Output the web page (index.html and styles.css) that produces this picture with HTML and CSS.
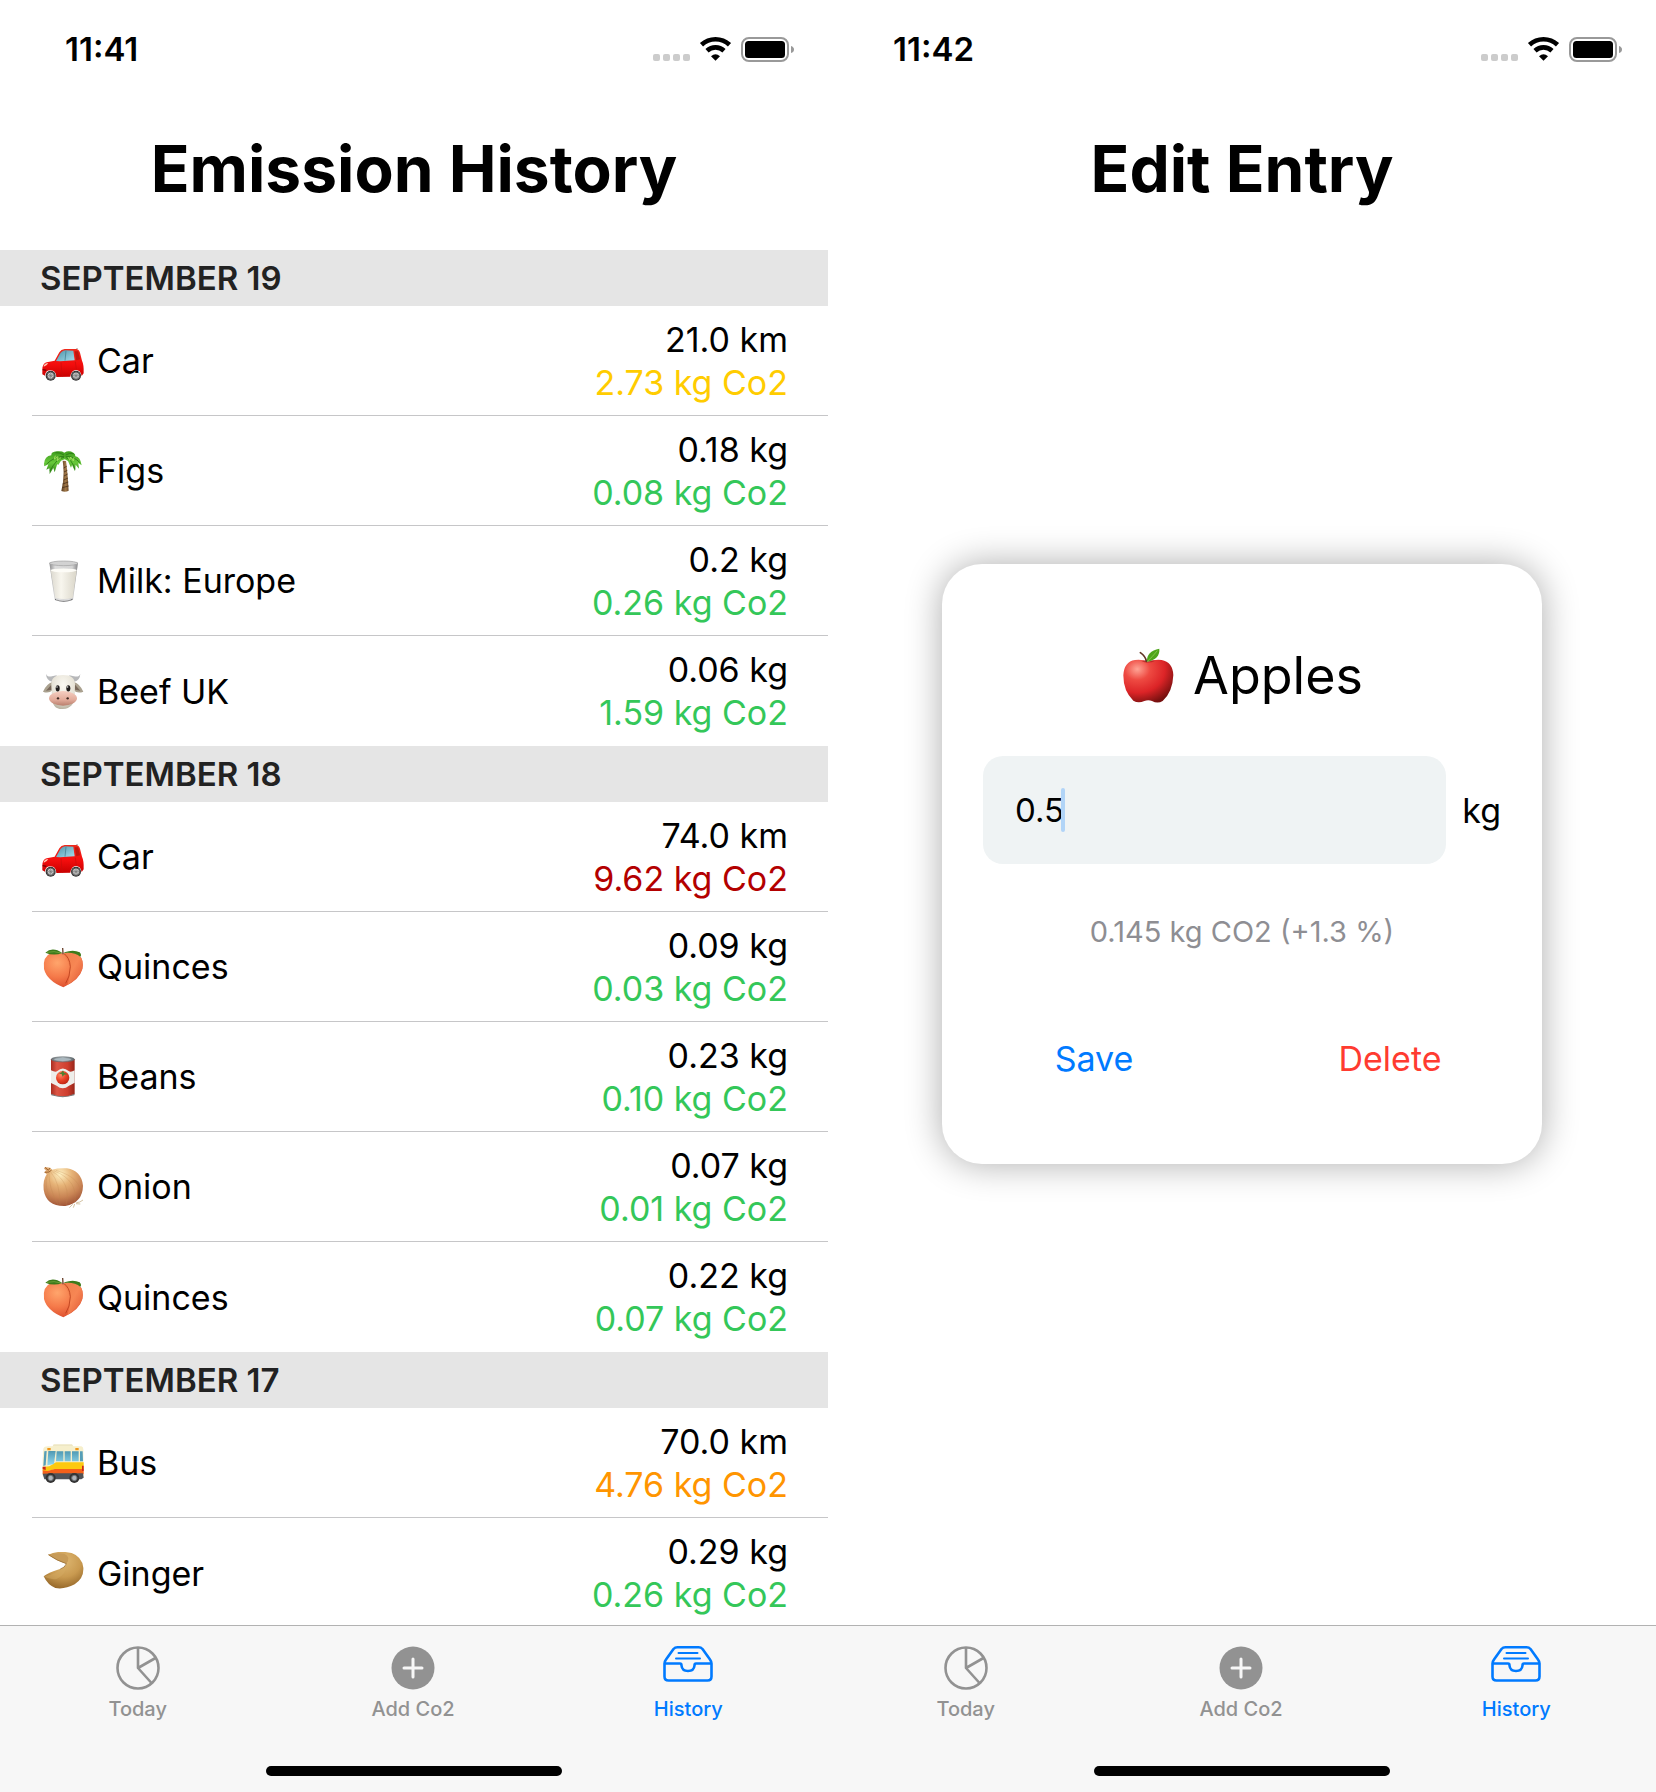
FILE: index.html
```html
<!DOCTYPE html>
<html lang="en">
<head>
<meta charset="utf-8">
<meta name="viewport" content="width=device-width, initial-scale=1">
<title>Emission History</title>
<link rel="stylesheet" href="styles.css">
</head>
<body>
<svg class="sprite" aria-hidden="true">
  <defs>
    <linearGradient id="g-car" x1="0" y1="0" x2="0" y2="1"><stop offset="0" stop-color="#ee2a1c"/><stop offset=".55" stop-color="#f40d0d"/><stop offset="1" stop-color="#c80000"/></linearGradient>
    <linearGradient id="g-glass" x1="0" y1="0" x2="1" y2="1"><stop offset="0" stop-color="#4d93a8"/><stop offset="1" stop-color="#a5dfee"/></linearGradient>
    <linearGradient id="g-leaf" x1="0" y1="0" x2="0" y2="1"><stop offset="0" stop-color="#3d9c1c"/><stop offset=".5" stop-color="#67c83a"/><stop offset="1" stop-color="#2f8218"/></linearGradient>
    <linearGradient id="g-trunk"><stop offset="0" stop-color="#5a3c20"/><stop offset=".6" stop-color="#a37a4a"/><stop offset="1" stop-color="#6d4925"/></linearGradient>
    <linearGradient id="g-milk"><stop offset="0" stop-color="#dcd9cf"/><stop offset=".4" stop-color="#f8f6ee"/><stop offset="1" stop-color="#dad6c9"/></linearGradient>
    <linearGradient id="g-cup"><stop offset="0" stop-color="#8c8c8e"/><stop offset=".2" stop-color="#dcdcdc"/><stop offset=".8" stop-color="#d4d4d4"/><stop offset="1" stop-color="#858587"/></linearGradient>
    <radialGradient id="g-cow" cx=".5" cy=".3" r=".7"><stop offset="0" stop-color="#fbf9f2"/><stop offset=".7" stop-color="#e6e2d6"/><stop offset="1" stop-color="#b9b3a2"/></radialGradient>
    <linearGradient id="g-muzzle" x1="0" y1="0" x2="0" y2="1"><stop offset="0" stop-color="#f6cfc2"/><stop offset=".6" stop-color="#e2ab9a"/><stop offset="1" stop-color="#b97f6d"/></linearGradient>
    <radialGradient id="g-peach" cx=".35" cy=".3" r=".8"><stop offset="0" stop-color="#ffa56c"/><stop offset=".5" stop-color="#f57a4a"/><stop offset="1" stop-color="#d84628"/></radialGradient>
    <linearGradient id="g-peach2" x1="0" y1="0" x2="1" y2="1"><stop offset="0" stop-color="#ee7f49"/><stop offset=".5" stop-color="#f78654"/><stop offset="1" stop-color="#e05632"/></linearGradient>
    <linearGradient id="g-can"><stop offset="0" stop-color="#a92d20"/><stop offset=".25" stop-color="#dd5645"/><stop offset=".7" stop-color="#cf3e2e"/><stop offset="1" stop-color="#98261a"/></linearGradient>
    <linearGradient id="g-lid"><stop offset="0" stop-color="#6e7478"/><stop offset=".5" stop-color="#b9c4ca"/><stop offset="1" stop-color="#5d6468"/></linearGradient>
    <radialGradient id="g-tomato" cx=".35" cy=".3" r=".8"><stop offset="0" stop-color="#ff8b68"/><stop offset=".5" stop-color="#ea4225"/><stop offset="1" stop-color="#b8200f"/></radialGradient>
    <radialGradient id="g-onion" cx=".42" cy=".18" r=".85"><stop offset="0" stop-color="#fff2c4"/><stop offset=".35" stop-color="#e6b377"/><stop offset=".7" stop-color="#c98454"/><stop offset="1" stop-color="#9c5034"/></radialGradient>
    <linearGradient id="g-window" x1="0" y1="0" x2="0" y2="1"><stop offset="0" stop-color="#4e99b3"/><stop offset="1" stop-color="#93d9ee"/></linearGradient>
    <radialGradient id="g-cookie" cx=".5" cy=".25" r=".8"><stop offset="0" stop-color="#dfb873"/><stop offset=".55" stop-color="#c99a50"/><stop offset="1" stop-color="#916326"/></radialGradient>
    <radialGradient id="g-apple" cx=".28" cy=".22" r=".85"><stop offset="0" stop-color="#ffa495"/><stop offset=".3" stop-color="#ee4a42"/><stop offset=".65" stop-color="#dc2427"/><stop offset="1" stop-color="#76100f"/></radialGradient>
  </defs>

  <symbol id="status" viewBox="0 0 144 26">
    <g fill="#ccc"><rect x="1" y="18" width="7" height="7" rx="2"/><rect x="11" y="18" width="7" height="7" rx="2"/><rect x="21" y="18" width="7" height="7" rx="2"/><rect x="31" y="18" width="7" height="7" rx="2"/></g>
    <g fill="none" stroke="#000" stroke-width="4.6"><path d="M49.500 8.800A20.500 20.500 0 0 1 77.500 8.800"/><path d="M55 14.700A12.500 12.500 0 0 1 72 14.700"/></g>
    <path d="M59 20.200Q63.500 16.400 68 20.200L63.500 24.800Z"/>
    <rect x="90" y="2" width="46" height="23" rx="7" fill="none" stroke="#999" stroke-width="2"/>
    <rect x="93" y="5" width="40" height="17" rx="3.500"/>
    <path d="M139 10Q142 11 142 13.500T139 17Z" fill="#999"/>
  </symbol>

  <symbol id="car" viewBox="36 30 126 126">
    <path d="M137 62L142 54" stroke="#555" stroke-width="2"/>
    <circle cx="62" cy="137" r="15" fill="#333"/><circle cx="138" cy="137" r="15" fill="#333"/>
    <path d="M37 118Q38 100 50 97L74 92L88 67Q93 58 104 57L138 57Q147 58 150 68L156 92Q162 104 161 130L155 138Q152 120 138 120T121 140L79 141Q78 121 62 121T45 137L37 133Z" fill="url(#g-car)"/>
    <path d="M78 93L92 68Q98 62 106 61L130 62L134 91L90 94Z" fill="url(#g-glass)"/>
    <path d="M108 62L105 92" stroke="#3c7486" stroke-width="2"/><path d="M134 64L144 64L150 88L139 91Z" fill="#c01810"/>
    <path d="M93 97Q94 125 98 140M136 95L139 118" stroke="#c80e0a" stroke-width="2" fill="none"/>
    <path d="M42 105Q46 99 55 99Q52 106 41 110Z" fill="#ffc8b2"/><path d="M38 119L49 121" stroke="#700" stroke-width="4"/>
    <circle cx="62" cy="137" r="11" fill="#ccc" stroke="#555" stroke-width="3"/><circle cx="138" cy="137" r="11" fill="#ccc" stroke="#555" stroke-width="3"/>
    <path d="M62 127V147M52 137H72M55 130L69 144M69 130L55 144M138 127V147M128 137H148M131 130L145 144M145 130L131 144" stroke="#777" stroke-width="2"/>
  </symbol>

  <symbol id="palm" viewBox="36 360 126 126">
    <path d="M98 392L108 393Q112 420 116 482Q106 488 94 483Q105 440 98 392Z" fill="url(#g-trunk)"/>
    <path d="M101 414L110 409M102 426L112 421M102 438L113 432M101 450L114 444M98 462L115 456M97 473L116 468" stroke="#493018" stroke-width="2.500"/>
    <path d="M42 401Q44 378 64 376Q62 366 81 364Q97 363 103 368Q116 360 130 368Q137 371 136 379Q151 380 155 406L145 399L147 416L137 404L135 424L126 405L123 413L114 393L104 388L93 392L84 406L82 401L74 427L70 414L59 432L58 415L49 419L55 403L43 409Z" fill="url(#g-leaf)"/>
    <path d="M103 379Q75 378 50 402M102 382Q80 384 60 423M107 379Q130 377 151 399M107 382Q126 389 135 418M102 375Q91 367 76 368M107 375Q120 367 131 371" fill="none" stroke="#2b7914" stroke-width="2.500"/>
    <path d="M76 377L73 387L84 380L82 392L93 383M115 382L119 391L122 381L130 393L132 382" fill="none" stroke="#a0dd5c" stroke-width="3"/>
  </symbol>

  <symbol id="milk" viewBox="36 60 126 126">
    <path d="M58 68Q100 58 144 68L129 179Q101 190 74 179Z" fill="url(#g-cup)"/>
    <ellipse cx="101" cy="70" rx="42" ry="7" fill="#d2d2d2" stroke="#a0a0a0" stroke-width="2"/>
    <path d="M62 91Q101 83 140 91L128 173Q101 181 76 173Z" fill="url(#g-milk)"/><ellipse cx="101" cy="91" rx="39" ry="5.500" fill="#fdfcf7"/>
    <path d="M75 176Q101 187 128 176L127 180Q101 190 75 180Z" fill="#6e6e70"/><path d="M78 179Q101 184 122 179" stroke="#eee" stroke-width="2" fill="none"/>
  </symbol>

  <symbol id="cow" viewBox="36 390 126 126">
    <path d="M48 401Q52 412 66 409L80 406V416L66 425Q49 421 48 401ZM151 401Q148 412 132 409L118 406V416L133 425Q150 421 151 401Z" fill="#b7b8ba"/>
    <path d="M67 426Q50 431 39 455Q56 462 68 450ZM132 426Q149 431 160 455Q142 462 130 450Z" fill="#aaa18f"/><path d="M64 434L48 452L65 449ZM135 434L151 452L135 449Z" fill="#79695b"/>
    <path d="M64 432Q64 405 99 405T135 432L134 468Q132 505 99 507T66 470Z" fill="url(#g-cow)"/>
    <ellipse cx="99" cy="475" rx="42" ry="22" fill="url(#g-muzzle)"/>
    <ellipse cx="83" cy="445" rx="6" ry="9.500" fill="#1f1c1b"/><ellipse cx="115" cy="445" rx="6" ry="9.500" fill="#1f1c1b"/><circle cx="81" cy="441" r="2" fill="#fff"/><circle cx="113" cy="441" r="2" fill="#fff"/>
    <circle cx="84" cy="475" r="3.500" fill="#402720"/><circle cx="113" cy="475" r="3.500" fill="#402720"/>
  </symbol>

  <symbol id="peach" viewBox="36 48 126 126">
    <path d="M100 71Q126 62 147 76Q162 89 157 117Q149 150 100 172Q51 152 42 117Q37 80 63 69Q84 64 100 71Z" fill="url(#g-peach)"/>
    <path d="M100 71Q126 62 147 76Q162 89 157 117Q149 143 112 165Q131 112 100 71Z" fill="url(#g-peach2)"/>
    <path d="M101 70Q119 82 121 110Q120 141 107 160" fill="none" stroke="#b93d1b" stroke-width="2.500"/>
    <path d="M97 69Q71 79 46 68Q67 49 97 69ZM103 67Q130 57 149 67Q156 75 151 80Q134 66 103 69Z" fill="#3d7a1b"/><path d="M51 67Q73 62 93 69" stroke="#87b147" stroke-width="2" fill="none"/>
    <path d="M99 73L98 54" stroke="#6b422c" stroke-width="4"/>
  </symbol>

  <symbol id="can" viewBox="36 378 126 126">
    <path d="M63 387V493Q98 507 134 493V387Z" fill="url(#g-can)"/>
    <path d="M63 421Q77 428 82 423Q98 408 116 423Q122 428 134 421V458Q123 464 117 467Q98 482 80 467Q73 464 63 459Z" fill="#eeeeea"/>
    <circle cx="98" cy="443" r="20" fill="url(#g-tomato)"/><path d="M87 432L96 426L99 421L102 428L113 433L102 434L98 440L95 432Z" fill="#4b8130"/>
    <path d="M64 491Q98 506 133 491V496Q98 507 64 496Z" fill="#777"/>
    <ellipse cx="98.500" cy="388" rx="35" ry="7.500" fill="url(#g-lid)" stroke="#5f686d" stroke-width="2"/><ellipse cx="98" cy="388" rx="26" ry="4" fill="#aab8bf"/>
  </symbol>

  <symbol id="onion" viewBox="36 48 126 126">
    <path d="M139 158Q150 158 159 150M138 161L151 162M134 162L130 173M128 163L118 173" stroke="#bea576" stroke-width="2" fill="none"/>
    <path d="M45 51L61 53L66 59Q83 54 111 55Q154 62 159 107Q158 158 106 168Q49 170 41 119Q38 91 50 73L43 67L48 61L42 56Z" fill="url(#g-onion)"/>
    <path d="M57 67Q56 115 84 164M62 66Q91 99 90 166M68 65Q125 100 108 166M73 63Q146 92 134 158M78 61Q157 84 151 137M53 73Q40 109 64 152" fill="none" stroke="#bd824c" stroke-width="1.500" opacity=".5"/>
    <path d="M45 52L55 61L60 54M44 67L57 66L65 60" fill="none" stroke="#9c612d" stroke-width="3"/>
  </symbol>

  <symbol id="bus" viewBox="36 66 126 126">
    <path d="M67 80L71 73H126L131 80Z" fill="#eee7c3"/>
    <path d="M38 116L40 86Q43 79 54 79H154Q160 80 160 88L161 174L38 169Z" fill="#f6efcc"/>
    <path d="M38 141L58 139L78 127H161V148H74L50 154L38 152Z" fill="#fdc90f"/>
    <path d="M38 151L52 153L74 147H161V163H38Z" fill="#f5601a"/>
    <path d="M55 93H77L72 132L52 136ZM80 94H100V124H78ZM104 94H122V124H104ZM126 94H146V124H126Z" fill="url(#g-window)"/><path d="M43 94L50 93L47 136L40 138ZM150 94H158L159 124H150Z" fill="#559eb8"/>
    <path d="M38 161L78 160H159L161 173L154 178H43Z" fill="#505359"/><path d="M38 140H47V150L38 148ZM156 137H161V153H156Z" fill="#ca271c"/>
    <path d="M52 84H62V91H52ZM136 84H146V91H136Z" fill="#ef9518"/>
    <circle cx="62" cy="174" r="15" fill="#333"/><circle cx="133" cy="174" r="15" fill="#333"/><circle cx="62" cy="174" r="8" fill="#aeb3b8" stroke="#6b7075" stroke-width="3"/><circle cx="133" cy="174" r="8" fill="#aeb3b8" stroke="#6b7075" stroke-width="3"/>
  </symbol>

  <symbol id="cookie" viewBox="36 396 126 126">
    <path d="M55 404Q84 390 125 399Q156 410 160 443Q162 475 134 493Q104 509 76 504Q53 495 41 469Q51 459 92 446Q104 443 109 431Q78 421 55 404Z" fill="url(#g-cookie)"/>
    <path d="M55 404Q81 398 103 401Q124 411 109 431Q78 421 55 404Z" fill="#c79b58"/><path d="M41 469Q76 464 110 434Q111 461 80 477Q57 480 41 469Z" fill="#d4a961" opacity=".5"/>
    <path d="M55 404Q80 422 109 431Q105 443 91 447" stroke="#8f652e" stroke-width="2" fill="none"/>
  </symbol>

  <symbol id="apple" viewBox="44 50 162 166">
    <path d="M125 91Q145 82 166 85Q199 91 201 130Q199 181 169 208Q154 217 137 208Q126 203 114 208Q96 216 81 207Q51 179 51 131Q53 90 86 85Q108 82 125 91Z" fill="url(#g-apple)"/>
    <path d="M105 88Q125 98 147 87Q126 83 105 88Z" fill="#9f1b18" opacity=".6"/>
    <path d="M120 89Q118 74 102 63" fill="none" stroke="#623626" stroke-width="5" stroke-linecap="round"/>
    <path d="M122 90Q120 58 159 51Q162 82 122 90Z" fill="#4ea51b"/><path d="M123 89Q138 76 153 57" stroke="#9bd55a" stroke-width="2" fill="none"/>
  </symbol>

  <symbol id="tab-today" viewBox="0 0 52 46">
    <g fill="none" stroke="currentColor" stroke-width="2.600" stroke-linejoin="round"><circle cx="26" cy="23" r="20.500"/><path d="M26 2.500V23L43.500 13M26 23L39.500 38"/></g>
  </symbol>
  <symbol id="tab-add" viewBox="0 0 52 46">
    <circle cx="26" cy="23" r="21.500" fill="currentColor"/><path d="M26 14V32M17 23H35" stroke="#f7f7f7" stroke-width="3" stroke-linecap="round"/>
  </symbol>
  <symbol id="tab-history" viewBox="0 0 52 46">
    <g fill="none" stroke="currentColor" stroke-width="2.600" stroke-linecap="round" stroke-linejoin="round"><path d="M2.500 18.500V31.500Q2.500 35.500 6.500 35.500H45.500Q49.500 35.500 49.500 31.500V18.500Q49.500 16.500 48 14.500L40.500 4Q39 2.300 36.500 2.300H15.500Q13 2.300 11.500 4L4 14.500Q2.500 16.500 2.500 18.500ZM2.500 18.500H18Q19.500 18.500 19.500 20.500Q20 26 26 26T32.500 20.500Q32.500 18.500 34 18.500H49.500"/><path d="M16.500 8H35.500M14 13.500H38" stroke-width="2"/></g>
  </symbol>
</svg>

<main class="screens">
  <section class="screen">
    <header class="status-bar"><time>11:41</time><svg class="status-icons" role="img" aria-label="Wi-Fi on, battery full"><use href="#status"/></svg></header>
    <h1 class="title">Emission History</h1>
    <div class="history">
      <h2 class="day">SEPTEMBER 19</h2>
      <ul class="entries">
        <li class="entry"><svg class="emoji"><use href="#car"/></svg><span class="name">Car</span><span class="amount">21.0 km<span class="co2 yellow">2.73 kg Co2</span></span></li>
        <li class="entry"><svg class="emoji"><use href="#palm"/></svg><span class="name">Figs</span><span class="amount">0.18 kg<span class="co2">0.08 kg Co2</span></span></li>
        <li class="entry"><svg class="emoji"><use href="#milk"/></svg><span class="name">Milk: Europe</span><span class="amount">0.2 kg<span class="co2">0.26 kg Co2</span></span></li>
        <li class="entry"><svg class="emoji"><use href="#cow"/></svg><span class="name">Beef UK</span><span class="amount">0.06 kg<span class="co2">1.59 kg Co2</span></span></li>
      </ul>
      <h2 class="day">SEPTEMBER 18</h2>
      <ul class="entries">
        <li class="entry"><svg class="emoji"><use href="#car"/></svg><span class="name">Car</span><span class="amount">74.0 km<span class="co2 red">9.62 kg Co2</span></span></li>
        <li class="entry"><svg class="emoji"><use href="#peach"/></svg><span class="name">Quinces</span><span class="amount">0.09 kg<span class="co2">0.03 kg Co2</span></span></li>
        <li class="entry"><svg class="emoji"><use href="#can"/></svg><span class="name">Beans</span><span class="amount">0.23 kg<span class="co2">0.10 kg Co2</span></span></li>
        <li class="entry"><svg class="emoji"><use href="#onion"/></svg><span class="name">Onion</span><span class="amount">0.07 kg<span class="co2">0.01 kg Co2</span></span></li>
        <li class="entry"><svg class="emoji"><use href="#peach"/></svg><span class="name">Quinces</span><span class="amount">0.22 kg<span class="co2">0.07 kg Co2</span></span></li>
      </ul>
      <h2 class="day">SEPTEMBER 17</h2>
      <ul class="entries">
        <li class="entry"><svg class="emoji"><use href="#bus"/></svg><span class="name">Bus</span><span class="amount">70.0 km<span class="co2 orange">4.76 kg Co2</span></span></li>
        <li class="entry"><svg class="emoji"><use href="#cookie"/></svg><span class="name">Ginger</span><span class="amount">0.29 kg<span class="co2">0.26 kg Co2</span></span></li>
      </ul>
    </div>
    <footer class="bottom">
      <nav class="tabs" aria-label="Main">
        <a class="tab" href="#today"><svg class="tab-icon"><use href="#tab-today"/></svg>Today</a>
        <a class="tab" href="#add"><svg class="tab-icon"><use href="#tab-add"/></svg>Add Co2</a>
        <a class="tab active" href="#history" aria-current="page"><svg class="tab-icon"><use href="#tab-history"/></svg>History</a>
      </nav>
      <div class="home-indicator"></div>
    </footer>
  </section>

  <section class="screen">
    <header class="status-bar"><time>11:42</time><svg class="status-icons" role="img" aria-label="Wi-Fi on, battery full"><use href="#status"/></svg></header>
    <h1 class="title">Edit Entry</h1>
    <div class="editor">
      <form class="card">
        <h2 class="item"><svg class="item-emoji"><use href="#apple"/></svg>Apples</h2>
        <div class="field-row">
          <div class="field"><input class="quantity" id="quantity" type="text" inputmode="decimal" value="0.5"><span class="caret"></span></div>
          <label class="unit" for="quantity">kg</label>
        </div>
        <p class="summary">0.145 kg CO2 (+1.3 %)</p>
        <div class="actions">
          <button class="action" type="submit">Save</button>
          <button class="action delete" type="button">Delete</button>
        </div>
      </form>
    </div>
    <footer class="bottom">
      <nav class="tabs" aria-label="Main">
        <a class="tab" href="#today"><svg class="tab-icon"><use href="#tab-today"/></svg>Today</a>
        <a class="tab" href="#add"><svg class="tab-icon"><use href="#tab-add"/></svg>Add Co2</a>
        <a class="tab active" href="#history" aria-current="page"><svg class="tab-icon"><use href="#tab-history"/></svg>History</a>
      </nav>
      <div class="home-indicator"></div>
    </footer>
  </section>
</main>
</body>
</html>
```
FILE: styles.css
```css
* { box-sizing: border-box; }

body {
  margin: 0;
  background: #fff;
  color: #000;
  font: 34px/43px Inter, "Liberation Sans", sans-serif;
}

h1, h2, p, ul { margin: 0; padding: 0; }

.sprite {
  position: absolute;
  width: 0;
  height: 0;
}

.screens {
  display: grid;
  grid-template-columns: 1fr 1fr;
}

.screen {
  display: flex;
  flex-direction: column;
  height: 100vh;
  min-width: 0;
}

/* Status bar and title */
.status-bar {
  display: flex;
  flex: none;
  align-items: center;
  justify-content: space-between;
  height: 100px;
  padding: 0 32px 2px 65px;
  font-size: 33px;
  font-weight: 600;
}

.status-icons {
  width: 144px;
  height: 26px;
}

.title {
  flex: none;
  padding: 29px 0 41px;
  font-size: 64px;
  font-weight: 700;
  line-height: 80px;
  text-align: center;
}

/* History list */
.history {
  flex: 1;
  min-height: 0;
  overflow: hidden;
}

.day {
  padding: 0 40px;
  background: #e5e5e5;
  color: #222;
  font-size: 33px;
  font-weight: 600;
  line-height: 56px;
}

.entries {
  padding-left: 32px;
  list-style: none;
}

.entry {
  display: flex;
  align-items: center;
  gap: 13px;
  height: 110px;
  padding: 0 40px 0 10px;
  border-bottom: 1px solid #c6c6c8;
}

.entry:last-child { border-bottom: 0; }

.emoji {
  flex: none;
  width: 42px;
  height: 42px;
}

.name { flex: 1; }

.amount { text-align: right; }

.co2 {
  display: block;
  color: #34c759;
}

.yellow { color: #ffcc00; }
.orange { color: #ff9500; }
.red { color: #b30000; }

/* Entry editor */
.editor {
  display: flex;
  flex: 1;
  align-items: center;
  justify-content: center;
  padding: 0 24px 147px;
}

.card {
  display: flex;
  flex-direction: column;
  width: 100%;
  max-width: 600px;
  padding: 78px 41px 84px;
  border-radius: 40px;
  box-shadow: 0 0 36px rgba(0, 0, 0, 0.33);
}

.item {
  display: flex;
  align-items: center;
  justify-content: center;
  gap: 18px;
  font-size: 52px;
  font-weight: 400;
  line-height: 68px;
}

.item-emoji {
  width: 54px;
  height: 56px;
}

.field-row {
  display: flex;
  align-items: center;
  gap: 16px;
  margin-top: 46px;
}

.field {
  position: relative;
  flex: 1;
}

.quantity {
  display: block;
  width: 100%;
  height: 108px;
  padding: 0 32px;
  border: 0;
  border-radius: 20px;
  background: #eff3f4;
  color: inherit;
  font: inherit;
  font-size: 33px;
  outline: 0;
}

.caret {
  position: absolute;
  top: 32px;
  left: 78px;
  width: 4px;
  height: 44px;
  border-radius: 2px;
  background: #b1d4f7;
}

.summary {
  margin-top: 46px;
  color: #8e8e93;
  font-size: 29px;
  text-align: center;
}

.actions {
  display: grid;
  grid-template-columns: 1fr 1fr;
  margin: 84px -37px 0;
}

.action {
  padding: 0;
  border: 0;
  background: none;
  color: #007aff;
  font: inherit;
}

.delete { color: #ff3b30; }

/* Tab bar */
.bottom {
  flex: none;
  padding: 19px 0 16px;
  border-top: 1px solid #b2b2b2;
  background: #f7f7f7;
}

.tabs {
  display: grid;
  grid-template-columns: repeat(3, 1fr);
  padding-right: 2px;
}

.tab {
  display: flex;
  flex-direction: column;
  align-items: center;
  gap: 6px;
  color: #929292;
  font-size: 20px;
  font-weight: 500;
  line-height: 24px;
  text-decoration: none;
}

.active { color: #007aff; }

.tab-icon {
  width: 52px;
  height: 46px;
}

.home-indicator {
  width: 296px;
  height: 10px;
  margin: 45px auto 0;
  border-radius: 5px;
  background: #000;
}
```
